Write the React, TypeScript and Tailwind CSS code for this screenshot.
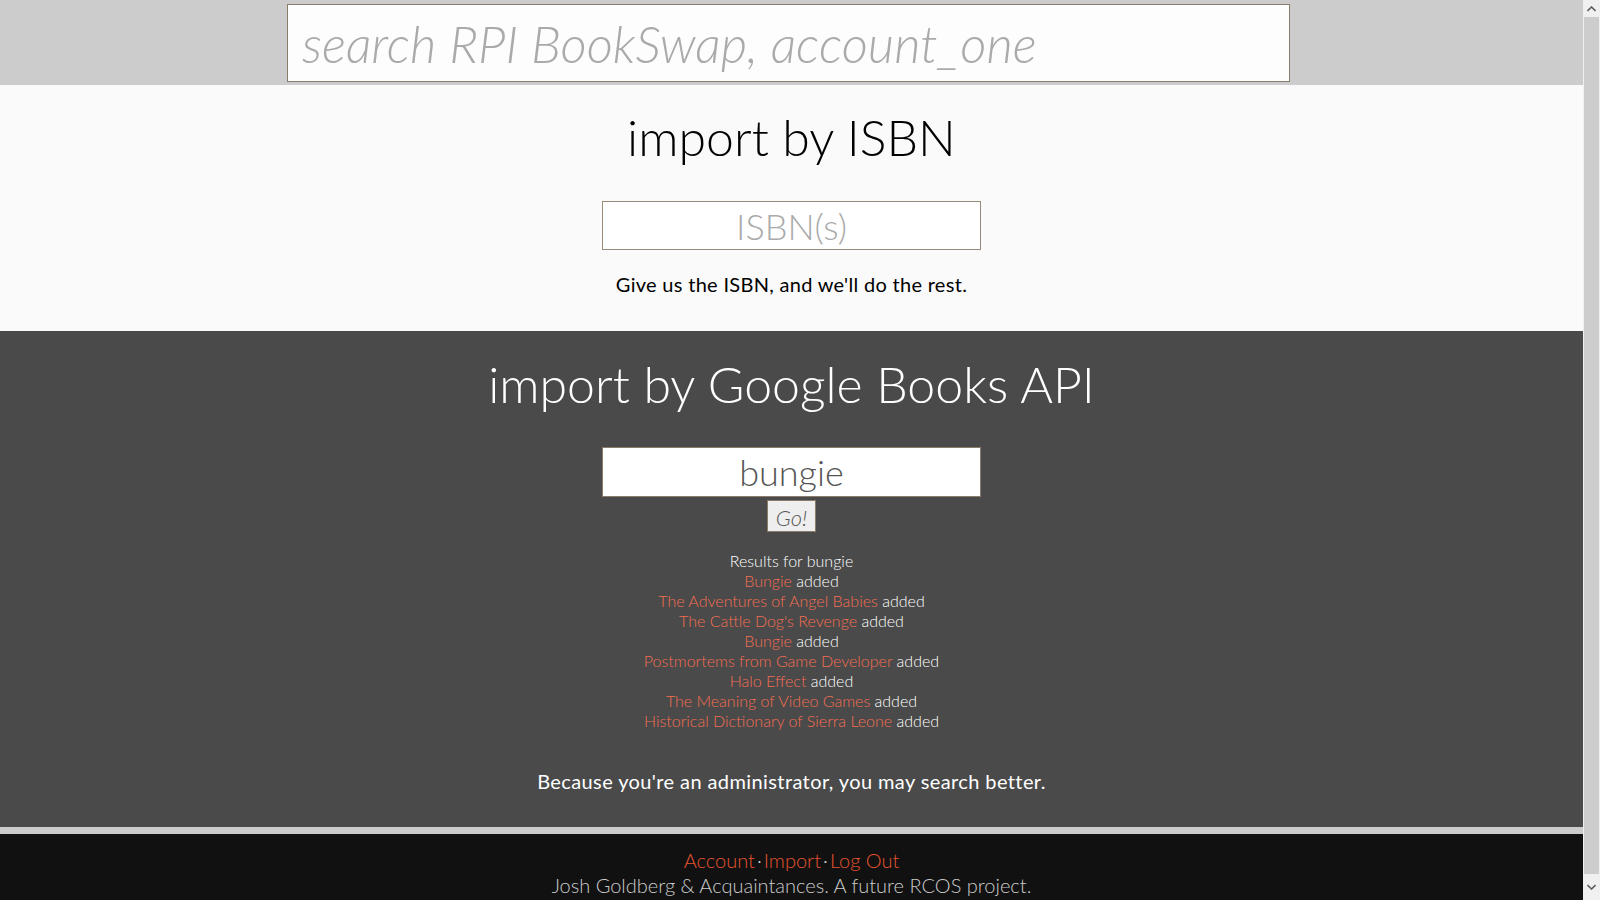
import React from 'react';

const results = [
  'Bungie',
  'The Adventures of Angel Babies',
  "The Cattle Dog's Revenge",
  'Bungie',
  'Postmortems from Game Developer',
  'Halo Effect',
  'The Meaning of Video Games',
  'Historical Dictionary of Sierra Leone',
];

const Scrollbar: React.FC = () => (
  <div className="w-[17px] h-full bg-[#f0f0f0] flex flex-col items-center">
    <div className="h-[17px] w-full flex items-center justify-center">
      <svg width="9" height="6" viewBox="0 0 9 6">
        <path d="M0.5 5 L4.5 1 L8.5 5" fill="none" stroke="#606060" strokeWidth="1.6" />
      </svg>
    </div>
    <div className="flex-1 w-[15px] bg-[#cdcdcd]" />
    <div className="h-[26px] w-full flex items-center justify-center">
      <svg width="9" height="6" viewBox="0 0 9 6">
        <path d="M0.5 1 L4.5 5 L8.5 1" fill="none" stroke="#606060" strokeWidth="1.6" />
      </svg>
    </div>
  </div>
);

export default function App() {
  return (
    <div className="h-screen w-full flex overflow-hidden font-['Lato',sans-serif]">
      <div className="flex-1 flex flex-col overflow-hidden">
        {/* Header search */}
        <header className="bg-[#cccccc] pt-[4px] pb-[3px] shrink-0">
          <input
            className="block ml-[287px] w-[1003px] h-[78px] border border-[#8b7b6b] bg-[#fdfdfd] px-[14px] text-[51px] italic font-light text-[#555] placeholder:text-[#aaaaaa] outline-none"
            placeholder="search RPI BookSwap, account_one"
          />
        </header>

        {/* ISBN import */}
        <section className="bg-[#fafafa] shrink-0 flex flex-col items-center pt-[22px] pb-[35px]">
          <h1 className="text-[50px] leading-[60px] font-light text-black">import by ISBN</h1>
          <input
            className="mt-[34px] w-[379px] h-[49px] border border-[#9a8a7a] bg-white text-center text-[36px] font-light text-[#555] placeholder:text-[#aaaaaa] outline-none"
            placeholder="ISBN(s)"
          />
          <p className="mt-[22px] text-[20px] leading-[24px] tracking-[0.3px] text-black">
            Give us the ISBN, and we'll do the rest.
          </p>
        </section>

        {/* Google Books import */}
        <section className="bg-[#4a4a4a] shrink-0 flex flex-col items-center pt-[23px] pb-[34px]">
          <h1 className="text-[50px] leading-[60px] font-light text-white">import by Google Books API</h1>
          <input
            className="mt-[33px] w-[379px] h-[50px] border border-[#8b7b6b] bg-white text-center text-[36px] font-light text-[#555] outline-none"
            defaultValue="bungie"
          />
          <button className="mt-[3px] w-[49px] h-[32px] border border-[#8b7b6b] bg-[#eeeeee] text-[22px] italic font-light text-[#555]">
            Go!
          </button>
          <div className="mt-[19px] flex flex-col items-center text-[16px] leading-[20px] font-light text-white">
            <div>Results for bungie</div>
            {results.map((title, i) => (
              <div key={i}>
                <a className="text-[#f36d52]">{title}</a> added
              </div>
            ))}
          </div>
          <p className="mt-[38px] text-[20px] leading-[24px] tracking-[0.4px] text-white">
            Because you're an administrator, you may search better.
          </p>
        </section>

        {/* Footer */}
        <footer className="shrink-0 border-t-[7px] border-[#cccccc] bg-[#111111] flex flex-col items-center pt-[14px] pb-[20px] font-light text-[20px] leading-[25px]">
          <div className="flex items-center text-[#e5532f]">
            <a>Account</a>
            <span className="text-[#cccccc] px-[2px]">·</span>
            <a>Import</a>
            <span className="text-[#cccccc] px-[2px]">·</span>
            <a>Log Out</a>
          </div>
          <div className="text-[#cccccc]">Josh Goldberg &amp; Acquaintances. A future RCOS project.</div>
        </footer>
      </div>
      <Scrollbar />
    </div>
  );
}
